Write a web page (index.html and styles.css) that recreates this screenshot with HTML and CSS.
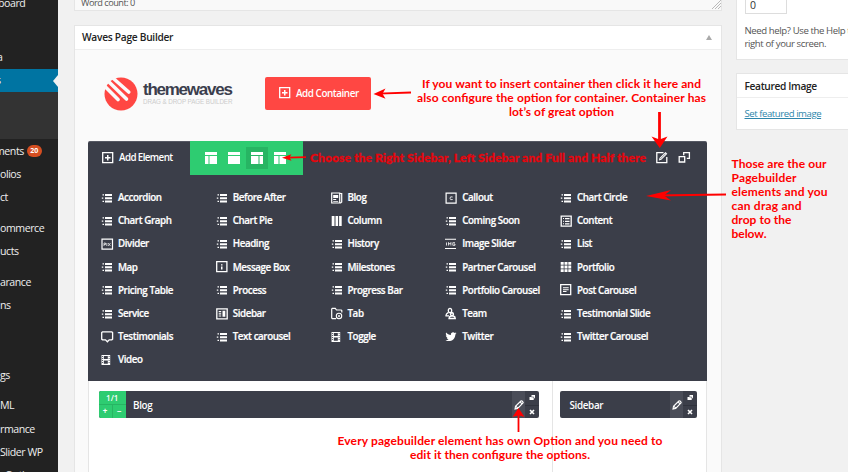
FILE: index.html
```
<!DOCTYPE html>
<html lang="en">
<head>
<meta charset="utf-8">
<title>Waves Page Builder</title>
<link rel="stylesheet" href="styles.css">
</head>
<body>
<svg class="defs" aria-hidden="true">
  <symbol id="list" viewBox="0 0 14 14"><path d="M4 3h7v2H4zM4 6.2h7v2H4zM4 9.4h7v2H4zM1.500 3.200H3v1.300H1.500zM.8 6.500h1.500v1.300H.8zM1.500 9.800H3v1.300H1.500z"/></symbol>
  <symbol id="plus" viewBox="0 0 14 14"><path d="M1.7 1.7h10v10h-10z" fill="none" stroke="currentColor" stroke-width="1.3"/><path d="M6 4h1.5v2H9.500v1.500h-2v2H6v-2H4V6h2z"/></symbol>
  <symbol id="blog" viewBox="0 0 14 14"><path d="M.700 2h8v10h-8zM8.700 2.500h2V11l-1 1h-1" fill="none" stroke="currentColor" stroke-width="1.2"/><path d="M2.200 4h5v3h-5zM2.200 8h3v1h-3zM2.200 10h5v.8h-5z"/></symbol>
  <symbol id="callout" viewBox="0 0 14 14"><path d="M1.100 2.100h10v10h-10z" fill="none" stroke="currentColor" stroke-width="1.200"/><path d="M7.700 6Q5 5 5 7.200T7.700 8.500" fill="none" stroke="currentColor" stroke-width=".8"/></symbol>
  <symbol id="column" viewBox="0 0 14 14"><path d="M.700 2h2.800v10H.7zM4.500 2h2.600v10H4.500zM8.100 2h2.600v10H8.100z"/></symbol>
  <symbol id="content" viewBox="0 0 14 14"><path d="M1.200 2.200h10v10h-10z" fill="none" stroke="currentColor" stroke-width="1.300"/><path d="M3 4h1v1H3zM3 6.700h1v1H3zM3 9.300h1v1H3zM5 4h4.500v1.200H5zM5 6.700h4.500v1.200H5zM5 9.300h4.500v1.200H5z"/></symbol>
  <symbol id="divider" viewBox="0 0 14 14"><path d="M1 2.200h10.500v10H1z" fill="none" stroke="currentColor" stroke-width="1.200"/><path d="M3 9V6h1.500v1.500H3M5.800 6v3M7 6l2.500 3M9.500 6 7 9" fill="none" stroke="currentColor" stroke-width=".7"/></symbol>
  <symbol id="image" viewBox="0 0 14 14"><path d="M0 1.700h11v1.100H0zM0 11h11v1.100H0z"/><path d="M1.500 5.500v3M3.500 8.500v-3l1.200 1.700 1.200-1.700v3M10 5.700H7.800v2.600H10V7H9" fill="none" stroke="currentColor" stroke-width=".8"/></symbol>
  <symbol id="message" viewBox="0 0 14 14"><path d="M.7 1.700h10.200v10H.7z" fill="none" stroke="currentColor" stroke-width="1.300"/><path d="M5 4.200h1.500v1.300H5zM5 6.500h1.500v3H5z"/></symbol>
  <symbol id="portfolio" viewBox="0 0 14 14"><path d="M.7 2h3v2.800h-3zM4.500 2h3v2.800h-3zM8.300 2h2.900v2.800H8.300zM.7 5.600h3v2.800h-3zM4.500 5.600h3v2.800h-3zM8.300 5.600h2.900v2.800H8.300zM.7 9.200h3V12h-3zM4.500 9.200h3V12h-3zM8.300 9.200h2.900V12H8.300z"/></symbol>
  <symbol id="post" viewBox="0 0 14 14"><path d="M.7 1.700h10v10h-10z" fill="none" stroke="currentColor" stroke-width="1.300"/><path d="M3 4.300h5.700v1H3zM3 6.200h5.700v1H3zM3 8.100h3.500v1H3z"/></symbol>
  <symbol id="sidebar" viewBox="0 0 14 14"><path d="M.8 1.800h10.400v10H.8z" fill="none" stroke="currentColor" stroke-width="1.300"/><path d="M2.700 4h2.500v1.200H2.700zM2.700 6.200h2.500v1.200H2.700zM2.700 8.400h2.500v1.200H2.700zM6.500 3.800h2.800v6H6.500z"/></symbol>
  <symbol id="tab" viewBox="0 0 14 14"><path d="M5 11.600H1.300L.7 11V2l.6-.6h3L5.500 3h4.700l.6.600v2" fill="none" stroke="currentColor" stroke-width="1.200"/><circle cx="8" cy="8.900" r="2.700" fill="none" stroke="currentColor" stroke-width="1.100"/><circle cx="8" cy="8.900" r="1"/></symbol>
  <symbol id="team" viewBox="0 0 14 14"><g fill="none" stroke="currentColor" stroke-width="1.300"><ellipse cx="5" cy="3.500" rx="1.700" ry="2.200"/><path d="M3.500 5.300Q.7 6.700 1 8.800h3M6.500 5.300q1 1 .3 2"/><circle cx="7" cy="7.200" r="1.500"/><path d="M4 11.500q0-2 2-2.500h2.300q2 .5 2 2.500z"/></g></symbol>
  <symbol id="testimonial" viewBox="0 0 14 14"><path d="M1.500 1.900h9.300l.8.700v6.500l-.8.700H8.200l-1.800 1.900-1.900-1.900h-3l-.8-.7V2.600z" fill="none" stroke="currentColor" stroke-width="1.300"/></symbol>
  <symbol id="film" viewBox="0 0 14 14"><path d="M.5 2h8.700v10H.5zM2.800 3v3h4V3zM2.800 7.400v3.400h4V7.400zM1.100 3v1h.8V3zM1.100 5v1h.8V5zM1.100 7v1h.8V7zM1.100 9v1h.8V9zM7.700 3v1h.8V3zM7.700 5v1h.8V5zM7.700 7v1h.8V7zM7.700 9v1h.8V9z" fill-rule="evenodd"/></symbol>
  <symbol id="bird" viewBox="0 0 24 24"><path d="M23 4.500c-.8.400-1.700.6-2.600.7.900-.5 1.600-1.400 2-2.400-.9.500-1.900.9-2.900 1.100A4.600 4.600 0 0 0 11.700 8C7.900 7.800 4.600 6 2.300 3.200c-1.200 2.100-.6 4.700 1.400 6-.7 0-1.400-.2-2-.5 0 2.200 1.500 4.100 3.600 4.500-.7.200-1.400.2-2 .1.500 1.800 2.200 3.100 4.200 3.100A9.200 9.200 0 0 1 .8 18.300C8.900 23 20.500 18.400 20.700 6.900c.9-.6 1.700-1.500 2.300-2.400z"/></symbol>
  <symbol id="edit" viewBox="0 0 14 14"><path d="M8.500 1.700H1.800v10h10V6" fill="none" stroke="currentColor" stroke-width="1.300"/><path d="m4.500 7 6-6 1.800 1.800-6 6-2.400.6z"/><path d="m5.300 8 5.300-5.300" stroke="#3b3e49" stroke-width=".6"/></symbol>
  <symbol id="windows" viewBox="0 0 14 14"><path d="M5.700 4.300V1.700h5.700v5.600H8.800M1.200 5.700h5.500V11H1.200z" fill="none" stroke="currentColor" stroke-width="1.300"/></symbol>
  <symbol id="pencil" viewBox="0 0 10 10"><path d="M1 9l.5-2.700L6.900 1q.5-.5 1.100 0l1 1q.4.500 0 1L3.700 8.400zM2 6.300l1.800 1.800M6.200 2 8 3.800" fill="none" stroke="currentColor" stroke-width="1.100"/></symbol>
  <symbol id="copy" viewBox="0 0 6 6"><path d="M2.500 0H6v3.200H4.700V5H.5V2h2z"/><path d="M2.500 2h2.200v1.200" fill="none" stroke="#3b3e49" stroke-width=".6"/></symbol>
  <symbol id="close" viewBox="0 0 6 6"><path d="M1 1l4 4M5 1 1 5" stroke="currentColor" stroke-width="1.600"/></symbol>
</svg>

<div class="screen">
  <nav class="menu">
    <a class="first">board</a>
    <a class="media">a</a>
    <a class="current">s</a>
    <div class="submenu"></div>
    <a class="in">ments <b>20</b></a>
    <a>olios</a>
    <a>ct</a>
    <a class="spaced">ommerce</a>
    <a>ucts</a>
    <a class="spaced">arance</a>
    <a>ns</a>
    <a class="clipped">s</a>
    <a></a>
    <a>gs</a>
    <a class="spaced">ML</a>
    <a>rmance</a>
    <a>Slider WP</a>
    <a class="last">s Options</a>
  </nav>

  <main class="content">
    <section class="editor"><span>Word count: 0</span>
      <svg class="grip" viewBox="0 0 9 9"><path d="M0 9 9 0M3 9l6-6M6 9l3-3"/></svg>
    </section>
    <section class="postbox">
      <h2>Waves Page Builder <i class="up"></i></h2>
      <div class="brandbar">
        <svg class="logo" viewBox="0 0 34 34"><circle cx="17" cy="17" r="16.500" fill="#ff4743"/><g stroke="#fafafa" stroke-linecap="round" fill="none"><path d="M1 9.500 14 22.500" stroke-width="3.600"/><path d="M5 5 22.500 22" stroke-width="3.600"/><path d="M10 2 24.700 15" stroke-width="3.600"/></g></svg>
        <div class="brand"><strong>themewaves</strong><small>DRAG &amp; DROP PAGE BUILDER</small></div>
        <button class="add"><svg><use href="#plus"/></svg>Add Container</button>
      </div>
      <div class="builder">
        <div class="toolbar">
          <div class="addel"><svg><use href="#plus"/></svg>Add Element</div>
          <div class="layouts">
            <span><svg viewBox="0 0 12 12"><path d="M0 0h12v3H0zM0 4h3.500v8H0zM4.500 4H12v8H4.500z"/></svg></span>
            <span><svg viewBox="0 0 12 12"><path d="M0 0h12v3H0zM0 4h12v8H0z"/></svg></span>
            <span class="on"><svg viewBox="0 0 12 12"><path d="M0 0h12v3H0zM0 4h7.500v8H0zM8.500 4H12v8H8.500z"/></svg></span>
            <span><svg viewBox="0 0 12 12"><path d="M0 0h12v3H0zM0 4h4.500v8H0zM5.500 4H12v8H5.500z"/></svg></span>
          </div>
          <div class="tools"><svg><use href="#edit"/></svg><svg><use href="#windows"/></svg></div>
        </div>
        <div class="elements">
          <div><svg><use href="#list"/></svg>Accordion</div>
          <div><svg><use href="#list"/></svg>Before After</div>
          <div><svg><use href="#blog"/></svg>Blog</div>
          <div><svg><use href="#callout"/></svg>Callout</div>
          <div><svg><use href="#list"/></svg>Chart Circle</div>
          <div><svg><use href="#list"/></svg>Chart Graph</div>
          <div><svg><use href="#list"/></svg>Chart Pie</div>
          <div><svg><use href="#column"/></svg>Column</div>
          <div><svg><use href="#list"/></svg>Coming Soon</div>
          <div><svg><use href="#content"/></svg>Content</div>
          <div><svg><use href="#divider"/></svg>Divider</div>
          <div><svg><use href="#list"/></svg>Heading</div>
          <div><svg><use href="#list"/></svg>History</div>
          <div><svg><use href="#image"/></svg>Image Slider</div>
          <div><svg><use href="#list"/></svg>List</div>
          <div><svg><use href="#list"/></svg>Map</div>
          <div><svg><use href="#message"/></svg>Message Box</div>
          <div><svg><use href="#list"/></svg>Milestones</div>
          <div><svg><use href="#list"/></svg>Partner Carousel</div>
          <div><svg><use href="#portfolio"/></svg>Portfolio</div>
          <div><svg><use href="#list"/></svg>Pricing Table</div>
          <div><svg><use href="#list"/></svg>Process</div>
          <div><svg><use href="#list"/></svg>Progress Bar</div>
          <div><svg><use href="#list"/></svg>Portfolio Carousel</div>
          <div><svg><use href="#post"/></svg>Post Carousel</div>
          <div><svg><use href="#list"/></svg>Service</div>
          <div><svg><use href="#sidebar"/></svg>Sidebar</div>
          <div><svg><use href="#tab"/></svg>Tab</div>
          <div><svg><use href="#team"/></svg>Team</div>
          <div><svg><use href="#list"/></svg>Testimonial Slide</div>
          <div><svg><use href="#testimonial"/></svg>Testimonials</div>
          <div><svg><use href="#list"/></svg>Text carousel</div>
          <div><svg><use href="#film"/></svg>Toggle</div>
          <div><svg class="bird"><use href="#bird"/></svg>Twitter</div>
          <div><svg><use href="#list"/></svg>Twitter Carousel</div>
          <div><svg><use href="#film"/></svg>Video</div>
        </div>
        <div class="canvas">
          <div class="wide">
            <div class="item">
              <div class="size"><span>1/1</span><div><i>+</i><i>−</i></div></div>
              <span class="name">Blog</span>
              <span class="pen"><svg><use href="#pencil"/></svg></span>
              <span class="acts"><i><svg><use href="#copy"/></svg></i><i><svg><use href="#close"/></svg></i></span>
            </div>
          </div>
          <div class="narrow">
            <div class="item">
              <span class="name">Sidebar</span>
              <span class="pen"><svg><use href="#pencil"/></svg></span>
              <span class="acts"><i><svg><use href="#copy"/></svg></i><i><svg><use href="#close"/></svg></i></span>
            </div>
          </div>
        </div>
      </div>
    </section>
  </main>

  <aside class="side">
    <section class="attributes">
      <div class="order">0</div>
      <p>Need help? Use the Help tab in the upper<br>right of your screen.</p>
    </section>
    <section class="featured">
      <h3>Featured Image</h3>
      <div><a>Set featured image</a></div>
    </section>
  </aside>
</div>

<svg class="notes" viewBox="0 0 848 472">
  <g class="thick">
    <path d="M411 92.500 378 93.700"/><path d="M306 157.200 288 157.700"/><path class="bold" d="M659.500 112v28"/><path d="M726 194.500 655 195.500"/><path d="M518.500 432v-17"/>
  </g>
  <path d="m373.500 94 12-5.500-3 5.300 3 5zM282 157.700l9.500-3.500-2 3.400 2 3.200zM651.500 136.500l8 3 8-3-7.700 11.500zM646 196l25-6-7 5.500 7 5zM518.500 408l6 9-6-1.800-6 1.800z"/>
  <text x="422" y="87.500" textLength="279">If you want to insert container then click it here and</text>
  <text x="417" y="101.500" textLength="289">also configure the option for container. Container has</text>
  <text x="509" y="115.500" textLength="105">lot’s of great option</text>
  <text class="heavy" x="310" y="162" textLength="336">Choose the Right Sidebar, Left Sidebar and Full and Half there</text>
  <text x="731.500" y="168" textLength="95">Those are the our</text>
  <text x="731.500" y="182" textLength="65">Pagebuilder</text>
  <text x="731.500" y="196" textLength="96">elements and you</text>
  <text x="731.500" y="210" textLength="70">can drag and</text>
  <text x="731.500" y="224" textLength="60">drop to the</text>
  <text x="731.500" y="238" textLength="35">below.</text>
  <text x="337.500" y="445" textLength="325">Every pagebuilder element has own Option and you need to</text>
  <text x="410" y="459" textLength="180">edit it then configure the options.</text>
</svg>
</body>
</html>
```
FILE: styles.css
```
* { box-sizing: border-box; }
body { margin: 0; background: #f1f1f1; font-family: "Open Sans", "Noto Sans", sans-serif; font-size: 10.5px; color: #333; overflow: hidden; }
svg { fill: currentColor; flex: none; }
i { font-style: normal; }
.defs { display: none; }
.screen { width: 848px; height: 472px; display: flex; overflow: hidden; }

.menu { width: 58px; height: 472px; background: #222; color: #eee; flex: none; overflow: hidden; font-size: 10.600px; letter-spacing: -.450px; margin-right: 16px; }
.menu a { display: flex; align-items: center; height: 23.200px; white-space: nowrap; }
.menu .first { margin-top: -8.500px; margin-left: -2px; }
.menu .media { margin-top: 31px; margin-left: -3px; }
.menu .current { background: #0074a2; color: #fff; position: relative; text-indent: -4px; }
.current::after { content: ""; position: absolute; right: 0; top: 6px; border: 6px solid transparent; border-left: 0; border-right: 5px solid #f1f1f1; }
.submenu { height: 47px; background: #333; }
.menu .spaced { margin-top: 7.600px; }
.menu .in { margin-left: -5px; }
.menu .clipped { margin-left: -5px; }
.menu .last { margin-left: -2px; }
.menu b { background: #d54e21; color: #fff; font-size: 7px; letter-spacing: 0; line-height: 12px; border-radius: 6px; padding: 0 3.500px; margin-left: 3px; }

.content { width: 648px; flex: none; margin-right: 14px; }
.editor { height: 11px; border: 1px solid #e5e5e5; border-top: 0; background: #f9f9f9; padding-left: 6px; font-size: 9.200px; letter-spacing: -.500px; line-height: 6px; color: #555; display: flex; justify-content: space-between; }
.grip { width: 9px; height: 9px; fill: none; stroke: #aaa; stroke-width: .8; }
.postbox { margin-top: 14px; border: 1px solid #e5e5e5; background: #fafafa; height: 460px; }
h2, h3 { margin: 0; font-size: 10.200px; letter-spacing: -.280px; font-weight: 600; color: #222; height: 24px; border-bottom: 1px solid #eee; background: #fff; display: flex; align-items: center; padding: 0 7.500px; }
h2 { justify-content: space-between; padding: 0 9px 1px 7px; }
.up { border: 3px solid transparent; border-top: 0; border-bottom: 5px solid #aaa; }
.brandbar { height: 91px; display: flex; align-items: center; padding: 0 0 4px 29px; }
.logo { width: 34px; height: 34px; margin-top: 0; }
.brand { width: 89px; margin-left: 5px; margin-right: 33px; white-space: nowrap; font-family: "Liberation Sans", sans-serif; }
.brand strong { display: block; font-size: 17px; line-height: 16px; letter-spacing: -1.250px; color: #3b3e4d; }
.brand small { display: block; font-size: 6.300px; line-height: 8px; color: #ccc; letter-spacing: -.100px; }
.add { width: 106px; height: 33px; background: #ff4743; color: #fff; border: 0; border-radius: 2px; font: 600 9.900px "Open Sans", sans-serif; letter-spacing: -.500px; padding: 0 0 1px 13px; display: flex; align-items: center; white-space: nowrap; }
.add { letter-spacing: -.450px; }
.add svg, .addel svg { width: 14px; height: 14px; margin-right: 4px; }

.builder { width: 619px; margin-left: 13px; color: #fff; font-weight: 600; }
.toolbar { height: 34px; background: #3b3e49; border-radius: 2px 2px 0 0; display: flex; border-top: 1px solid #555863; }
.addel { width: 102px; padding: 0 0 2px 13px; display: flex; align-items: center; font-size: 9.800px; letter-spacing: -.600px; }
.layouts { width: 113px; margin-top: -1px; background: #2ecc71; height: 34px; display: flex; align-items: center; padding: 0 0 1px 10px; gap: 1px; }
.layouts span { width: 22px; height: 22px; display: grid; place-items: center; }
.layouts svg { width: 12px; height: 12px; }
.layouts .on { background: #27b563; }
.tools { margin-left: auto; display: flex; gap: 9px; align-items: center; padding: 0 15.500px 2px 0; }
.tools svg { width: 14px; height: 14px; }
.elements { height: 206px; background: #3b3e49; display: grid; grid-template-columns: repeat(5, 114.750px); grid-auto-rows: 23.200px; padding: 11px 0 0 13px; font-size: 9.800px; letter-spacing: -.420px; -webkit-text-stroke: .2px #fff; }
.elements div { display: flex; align-items: center; white-space: nowrap; }
.elements svg { width: 14px; height: 14px; margin-right: 3px; }
.elements .bird { width: 12px; height: 12px; margin-right: 5px; }
.canvas { height: 100px; background: #fff; border: 1px solid #e5e5e5; border-top: 0; display: flex; }
.wide { width: 464px; border-right: 1px solid #e5e5e5; padding: 10px 13px 0 9.500px; }
.narrow { flex: 1; padding: 10px 9px 0 7px; }
.item { height: 27px; background: #3b3e49; display: flex; align-items: stretch; border-radius: 2px; overflow: hidden; }
.name { flex: 1; display: flex; align-items: center; padding-left: 7px; font-size: 9.900px; letter-spacing: -.350px; }
.narrow .name { padding-left: 9.500px; }
.size { width: 27.500px; background: #2ecc71; font-size: 8px; text-align: center; }
.size span { display: block; height: 13.500px; line-height: 13px; border-bottom: 1px solid #27b563; }
.size div { display: flex; line-height: 12px; }
.size i { flex: 1; height: 14px; font-weight: 700; }
.size i + i { border-left: 1px solid #27b563; }
.pen { width: 13px; background: #4a4d58; display: grid; place-items: center; }
.pen svg { width: 10px; height: 10px; }
.acts { width: 14px; }
.acts i { height: 13.500px; display: grid; place-items: center; }
.acts i + i { border-top: 1px solid #30333d; }
.acts svg { width: 6px; height: 6px; }

.side { width: 130px; flex: none; font-size: 9.600px; letter-spacing: -.300px; color: #555; }
.side section { background: #fff; border: 1px solid #e5e5e5; }
.attributes { height: 60px; border-top: 0 !important; padding-left: 8px; overflow: hidden; }
.order { width: 42px; height: 14px; border: 1px solid #ddd; border-top: 0; padding-left: 4px; line-height: 11px; font-size: 10.500px; color: #333; }
.attributes p { margin: 10px 0 0 -.5px; line-height: 13px; white-space: nowrap; letter-spacing: -.400px; }
.featured { margin-top: 13px; height: 57px; }
.featured h3 { letter-spacing: -.350px; }
.featured div { padding: 9px 7.500px; line-height: 14px; letter-spacing: -.450px; }
.featured a { color: #2e86ab; text-decoration: underline; white-space: nowrap; }

.notes { position: absolute; left: 0; top: 0; width: 848px; height: 472px; fill: #f00; font: 700 12px Lato, sans-serif; }
.thick path { stroke: #f00; stroke-width: 1.800; fill: none; }
.thick .bold { stroke-width: 2.800; }
.heavy { font-weight: 900; fill: #e6050d; stroke: #e6050d; stroke-width: .3; }
```
